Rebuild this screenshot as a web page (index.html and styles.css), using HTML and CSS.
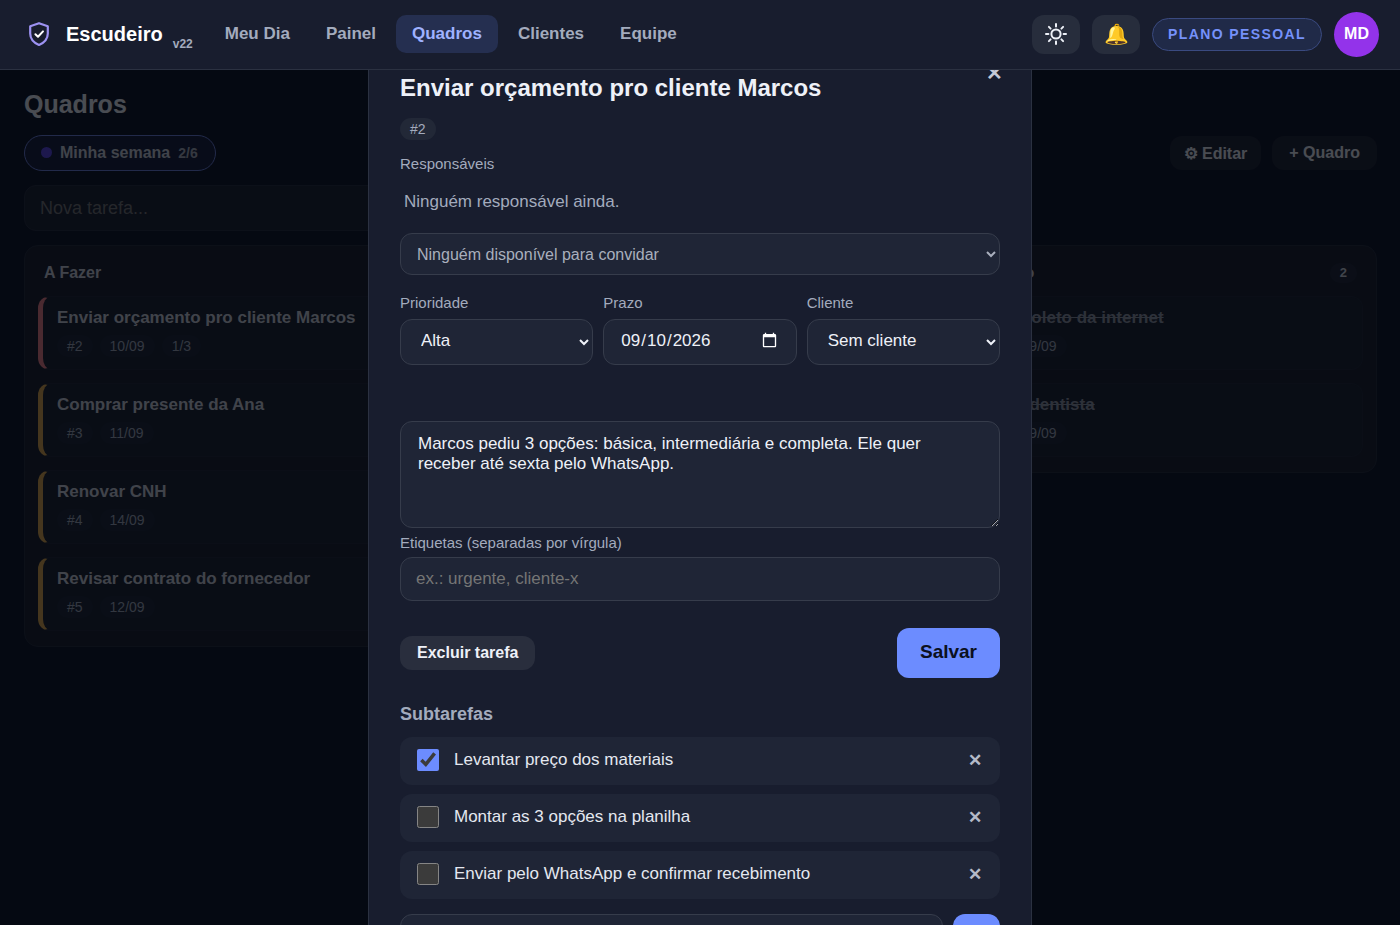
FILE: index.html
```html
<!DOCTYPE html>
<html lang="pt-BR">
<head>
    <meta charset="UTF-8">
    <meta name="viewport" content="width=device-width, initial-scale=1">
    <title>Escudeiro</title>
    <link rel="stylesheet" href="styles.css">
</head>
<body>
    <header class="topbar">
        <a class="brand" href="#">
            <svg class="brand-logo" viewBox="0 0 26 26" fill="none" stroke-linecap="round" stroke-linejoin="round">
                <path d="M13 2.2 L21.8 5.2 V12.4 C21.8 17.8 18.2 21.6 13 24 C7.8 21.6 4.2 17.8 4.2 12.4 V5.2 Z" stroke="#9d92f2" stroke-width="2.2"/>
                <path d="M9.4 13.2 L12 15.8 L17 10.4" stroke="#ffffff" stroke-width="2"/>
            </svg>
            <span class="brand-name">Escudeiro</span>
            <small class="version">v22</small>
        </a>
        <nav class="nav">
            <a href="#">Meu Dia</a>
            <a href="#">Painel</a>
            <a href="#" class="active">Quadros</a>
            <a href="#">Clientes</a>
            <a href="#">Equipe</a>
        </nav>
        <div class="topbar-right">
            <button class="icon-btn" aria-label="Alternar tema">
                <svg viewBox="0 0 24 24" width="24" height="24" fill="none" stroke="currentColor" stroke-width="2" stroke-linecap="round">
                    <circle cx="12" cy="12" r="4.6"/>
                    <path d="M12 2v2.4M12 19.6V22M2 12h2.4M19.6 12H22M4.9 4.9l1.7 1.7M17.4 17.4l1.7 1.7M4.9 19.1l1.7-1.7M17.4 6.6l1.7-1.7"/>
                </svg>
            </button>
            <button class="icon-btn" aria-label="Notificações">🔔</button>
            <span class="plan">PLANO PESSOAL</span>
            <button class="avatar">MD</button>
        </div>
    </header>

    <main class="page">
        <h1>Quadros</h1>
        <div class="board-bar">
            <button class="board-tab"><span class="dot"></span>Minha semana <small>2/6</small></button>
            <div class="board-actions">
                <button class="btn btn-edit">⚙ Editar</button>
                <button class="btn">+ Quadro</button>
            </div>
        </div>
        <input class="new-task" type="text" placeholder="Nova tarefa..." aria-label="Nova tarefa">

        <div class="columns">
            <section class="column">
                <h2>A Fazer</h2>
                <article class="card high">
                    <h3>Enviar orçamento pro cliente Marcos</h3>
                    <div class="chips"><span class="chip">#2</span><span class="chip">10/09</span><span class="chip">1/3</span></div>
                </article>
                <article class="card medium">
                    <h3>Comprar presente da Ana</h3>
                    <div class="chips"><span class="chip">#3</span><span class="chip">11/09</span></div>
                </article>
                <article class="card medium">
                    <h3>Renovar CNH</h3>
                    <div class="chips"><span class="chip">#4</span><span class="chip">14/09</span></div>
                </article>
                <article class="card medium">
                    <h3>Revisar contrato do fornecedor</h3>
                    <div class="chips"><span class="chip">#5</span><span class="chip">12/09</span></div>
                </article>
            </section>
            <section class="column">
                <h2>Fazendo</h2>
            </section>
            <section class="column">
                <h2>Concluído <span class="count">2</span></h2>
                <article class="card done">
                    <h3>Pagar boleto da internet</h3>
                    <div class="chips"><span class="chip">#1</span><span class="chip">09/09</span></div>
                </article>
                <article class="card done">
                    <h3>Marcar dentista</h3>
                    <div class="chips"><span class="chip">#6</span><span class="chip">09/09</span></div>
                </article>
            </section>
        </div>
    </main>

    <div class="overlay">
        <div class="modal" role="dialog" aria-labelledby="task-title">
            <button class="close" aria-label="Fechar">✕</button>
            <h2 id="task-title">Enviar orçamento pro cliente Marcos</h2>
            <div class="chips"><span class="chip">#2</span></div>

            <label class="label-people" for="people">Responsáveis</label>
            <p class="empty">Ninguém responsável ainda.</p>
            <select id="people" class="field invite" disabled>
                <option>Ninguém disponível para convidar</option>
            </select>

            <div class="row">
                <div class="cell">
                    <label for="priority">Prioridade</label>
                    <select id="priority" class="field"><option>Alta</option><option>Média</option><option>Baixa</option></select>
                </div>
                <div class="cell">
                    <label for="due">Prazo</label>
                    <input id="due" class="field" type="date" value="2026-09-10">
                </div>
                <div class="cell">
                    <label for="client">Cliente</label>
                    <select id="client" class="field"><option>Sem cliente</option></select>
                </div>
            </div>

            <textarea class="field notes" aria-label="Descrição">Marcos pediu 3 opções: básica, intermediária e completa. Ele quer receber até sexta pelo WhatsApp.</textarea>
            <label for="tags">Etiquetas (separadas por vírgula)</label>
            <input id="tags" class="field tags" type="text" placeholder="ex.: urgente, cliente-x">

            <div class="modal-actions">
                <button class="btn delete">Excluir tarefa</button>
                <button class="save">Salvar</button>
            </div>

            <h3 class="sub-title">Subtarefas</h3>
            <ul class="subtasks">
                <li><input type="checkbox" id="s1" checked><label for="s1">Levantar preço dos materiais</label><button aria-label="Remover">✕</button></li>
                <li><input type="checkbox" id="s2"><label for="s2">Montar as 3 opções na planilha</label><button aria-label="Remover">✕</button></li>
                <li><input type="checkbox" id="s3"><label for="s3">Enviar pelo WhatsApp e confirmar recebimento</label><button aria-label="Remover">✕</button></li>
            </ul>
            <div class="sub-add">
                <input class="field" type="text" aria-label="Nova subtarefa">
                <button class="save" aria-label="Adicionar"></button>
            </div>
        </div>
    </div>
</body>
</html>
```

FILE: styles.css
```css
:root {
    color-scheme: dark;
    --bg: #0d1122;
    --surface: #181d2e;
    --field: #1f2536;
    --line: #363c4b;
    --text: #eef1f8;
    --muted: #a3abbd;
    --accent: #6c8cff;
}

* {
    box-sizing: border-box;
}

body {
    margin: 0;
    min-height: 100vh;
    overflow: hidden;
    background: var(--bg);
    color: var(--text);
    font-family: "Liberation Sans", Arial, sans-serif;
    font-size: 17px;
}

button, input, select, textarea {
    font: inherit;
    color: inherit;
}

button {
    border: 0;
    cursor: pointer;
}

h1, h2, h3, p, ul {
    margin: 0;
    padding: 0;
}

/* topbar */
.topbar {
    position: relative;
    z-index: 20;
    display: flex;
    align-items: center;
    height: 70px;
    padding: 0 21px 1px 26px;
    background: var(--surface);
    border-bottom: 1px solid #2b3141;
}

.brand {
    display: flex;
    align-items: center;
    color: #fff;
    text-decoration: none;
    font-weight: bold;
}

.brand-logo {
    width: 26px;
    height: 26px;
    margin-right: 14px;
}

.brand-name {
    font-size: 20px;
}

.version {
    align-self: flex-end;
    margin: 0 16px -4px 10px;
    font-size: 12px;
    color: var(--muted);
}

.nav {
    display: flex;
    gap: 4px;
}

.nav a {
    padding: 9px 16px;
    border-radius: 10px;
    color: var(--muted);
    font-weight: bold;
    line-height: 20px;
    text-decoration: none;
}

.nav a.active {
    background: #252f50;
    color: #9fb2ff;
}

.topbar-right {
    display: flex;
    align-items: center;
    gap: 12px;
    margin-left: auto;
}

.icon-btn {
    display: flex;
    align-items: center;
    justify-content: center;
    width: 48px;
    height: 39px;
    padding: 0;
    border-radius: 12px;
    background: #272d3c;
    font-size: 20px;
}

.plan {
    padding: 0 15px;
    border: 1px solid #3a4a80;
    border-radius: 17px;
    background: #202a48;
    color: #7591fa;
    font-size: 14px;
    font-weight: bold;
    line-height: 31px;
    letter-spacing: 0.1em;
}

.avatar {
    width: 45px;
    height: 45px;
    padding: 0;
    border-radius: 50%;
    background: #9333ea;
    color: #fff;
    font-size: 16px;
    font-weight: bold;
}

/* board */
.page {
    padding: 19px 23px 24px 24px;
}

h1 {
    font-size: 25px;
    line-height: 30px;
}

.board-bar {
    display: flex;
    align-items: center;
    justify-content: space-between;
    margin: 16px 0 14px;
}

.board-tab {
    display: flex;
    align-items: center;
    gap: 8px;
    height: 36px;
    padding: 0 17px 1px 16px;
    border: 1px solid #6c80dd;
    border-radius: 18px;
    background: #151d39;
    color: #d0d4de;
    font-size: 16px;
    font-weight: bold;
}

.board-tab small {
    font-size: 14px;
    opacity: 0.8;
}

.dot {
    width: 11px;
    height: 11px;
    border-radius: 50%;
    background: #5a45e8;
}

.board-actions {
    display: flex;
    gap: 11px;
}

.btn {
    height: 34px;
    padding: 0 17px;
    border-radius: 12px;
    background: #1d2231;
    font-size: 16px;
    font-weight: bold;
}

.btn-edit {
    padding: 0 14px;
}

.new-task {
    display: block;
    width: 100%;
    max-width: 640px;
    height: 46px;
    padding: 0 15px;
    border: 1px solid #242a3b;
    border-radius: 12px;
    background: #1a1f2e;
    font-size: 18px;
}

.new-task::placeholder {
    color: #757575;
}

.columns {
    display: grid;
    grid-template-columns: repeat(3, 1fr);
    align-items: start;
    gap: 15px;
    margin-top: 14px;
}

.column {
    display: flex;
    flex-direction: column;
    gap: 13px;
    padding: 13px 13px 15px;
    border: 1px solid #222838;
    border-radius: 14px;
    background: #181d2b;
}

.column h2 {
    display: flex;
    justify-content: space-between;
    padding: 4px 6px 0;
    font-size: 16px;
    line-height: 20px;
    color: #d0d4de;
}

.count {
    padding: 0 10px;
    border-radius: 10px;
    background: #1f2433;
    font-size: 13px;
}

.card {
    height: 74px;
    padding: 11px 14px;
    border: 1px solid #1e2433;
    border-left-width: 5px;
    border-radius: 12px;
    background: #191e2c;
}

.card.high {
    border-left-color: #f08088;
}

.card.medium {
    border-left-color: #e0a84a;
}

.card h3 {
    font-size: 17px;
    line-height: 20px;
    color: #d0d4de;
}

.card.done {
    border-left-color: #191e2c;
}

.card.done h3 {
    color: #9297a6;
    text-decoration: line-through;
}

.chips {
    display: flex;
    gap: 7px;
}

.card .chips {
    margin-top: 7px;
}

.chip {
    padding: 0 10px;
    border-radius: 11px;
    background: #222837;
    color: var(--muted);
    font-size: 14px;
    line-height: 22px;
}

.card .chip {
    background: #1b2433;
}

/* task modal */
.overlay {
    position: fixed;
    inset: 0;
    z-index: 10;
    display: flex;
    justify-content: center;
    align-items: flex-start;
    overflow: auto;
    scrollbar-width: none;
    background: rgba(3, 5, 12, 0.7);
}

.modal {
    position: relative;
    width: 100%;
    max-width: 664px;
    padding: 72px 31px 31px;
    border: 1px solid #2b3141;
    background: var(--surface);
}

.modal h2 {
    padding-right: 40px;
    font-size: 24px;
    line-height: 30px;
}

.close {
    position: absolute;
    top: 57px;
    right: 22px;
    width: 30px;
    height: 30px;
    padding: 0;
    background: none;
    color: #c4c9d6;
    font-size: 20px;
    font-weight: bold;
}

.modal > .chips {
    margin: 15px 0 14px;
}

.modal label {
    display: block;
    color: var(--muted);
    font-size: 15px;
    line-height: 20px;
}

.empty {
    padding: 18px 4px 21px;
    color: var(--muted);
    line-height: 20px;
}

.field {
    display: block;
    width: 100%;
    height: 46px;
    padding: 0 16px;
    border: 1px solid var(--line);
    border-radius: 12px;
    background: var(--field);
}

.field::placeholder {
    color: #757575;
}

.invite {
    height: 42px;
    padding: 0 12px;
    font-size: 16px;
    color: #a9afbd;
    opacity: 1;
}

.row {
    display: grid;
    grid-template-columns: repeat(3, 1fr);
    gap: 10px;
    margin: 18px 0 56px;
}

.cell .field {
    margin-top: 6px;
    padding-bottom: 3px;
}

.notes {
    height: 107px;
    padding: 12px 17px;
    resize: vertical;
}

.notes + label {
    margin: 5px 0 4px;
}

.tags {
    height: 44px;
    padding: 0 15px 1px;
}

.modal-actions {
    display: flex;
    align-items: center;
    justify-content: space-between;
    margin: 27px 0 25px;
}

.delete {
    background: #292e3d;
}

.save {
    height: 50px;
    padding: 0 23px 3px;
    border-radius: 12px;
    background: var(--accent);
    color: #0b1020;
    font-size: 19px;
    font-weight: bold;
}

.sub-title {
    font-size: 18px;
    line-height: 22px;
    color: var(--muted);
}

.subtasks {
    display: grid;
    gap: 9px;
    margin: 12px 0 15px;
    list-style: none;
}

.subtasks li {
    display: flex;
    align-items: center;
    height: 48px;
    padding: 0 18px 2px 17px;
    border-radius: 12px;
    background: var(--field);
}

.subtasks input {
    width: 22px;
    height: 22px;
    margin: 0 15px 0 0;
    accent-color: var(--accent);
}

.subtasks label {
    flex: 1;
    padding-bottom: 1px;
    color: #e4e8f0;
    font-size: 17px;
}

.subtasks button {
    padding: 0;
    background: none;
    color: #b4bac8;
    font-size: 17px;
    font-weight: bold;
}

.sub-add {
    display: flex;
    gap: 10px;
}

.sub-add .field {
    flex: 1;
}

.sub-add .save {
    width: 47px;
    height: 46px;
    padding: 0;
}
```
